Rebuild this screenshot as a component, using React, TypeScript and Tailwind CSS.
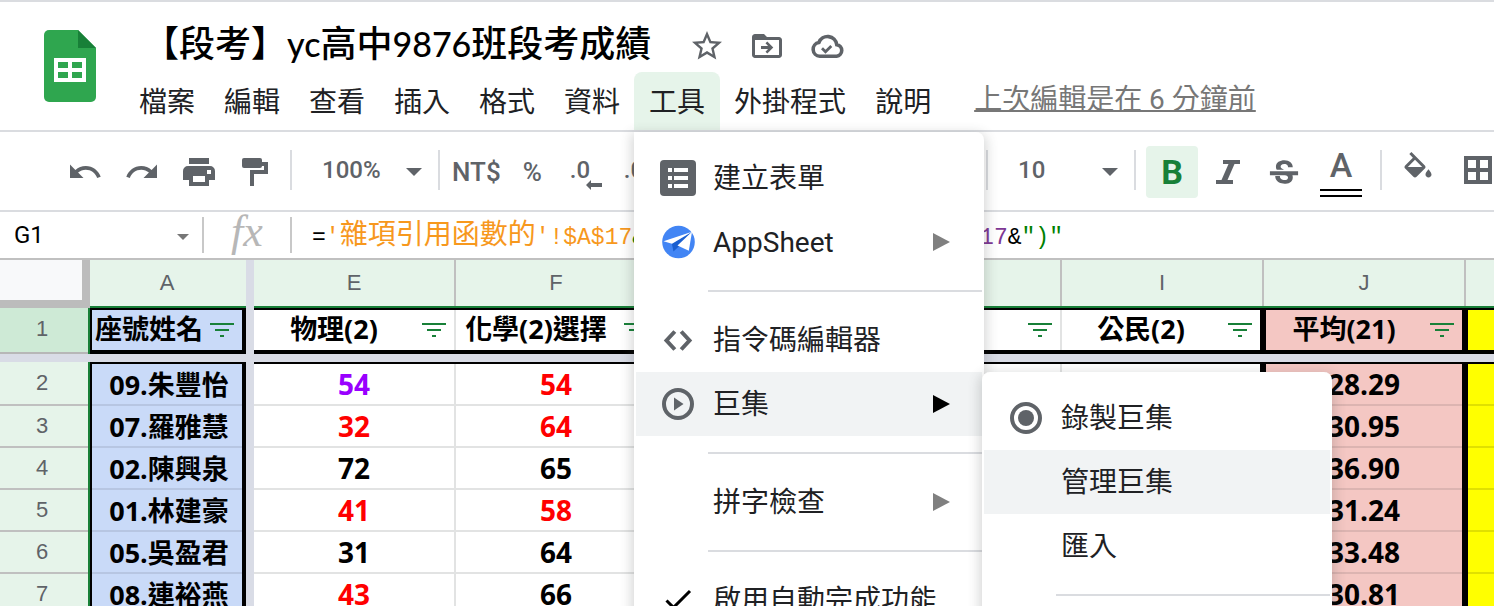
import type { ReactNode } from "react";

const CJK = "font-['Roboto','Noto_Sans_CJK_TC',sans-serif]";

/* ---------- icons ---------- */

function Icon({ children, box = 36, className = "size-9" }: { children: ReactNode; box?: number; className?: string }) {
  return (
    <svg viewBox={`0 0 ${box} ${box}`} className={`${className} shrink-0`} fill="currentColor" aria-hidden="true">
      {children}
    </svg>
  );
}

function Caret({ className }: { className: string }) {
  return (
    <svg viewBox="0 0 16 8" className={className} fill="currentColor" aria-hidden="true">
      <path d="M0 0h16L8 8z" />
    </svg>
  );
}

function SheetsLogo() {
  return (
    <svg viewBox="0 0 52 72" className="h-[72px] w-[52px]" aria-hidden="true">
      <path fill="#2fa64f" d="M5 0h29l18 18v49a5 5 0 0 1-5 5H5a5 5 0 0 1-5-5V5a5 5 0 0 1 5-5z" />
      <path fill="#188038" d="M34 0l18 18H34z" />
      <path fill="#fff" fillRule="evenodd" d="M10 28h32v24H10zM14 32v6h10v-6zM28 32v6h10v-6zM14 42v6h10v-6zM28 42v6h10v-6z" />
    </svg>
  );
}

function FilterIcon() {
  return (
    <svg viewBox="0 0 24 14" className="h-[14px] w-6 shrink-0" fill="#188038" aria-hidden="true">
      <path d="M0 0h24v2H0zM5 6h14v2H5zM10 12h4v2h-4z" />
    </svg>
  );
}

/* ---------- menus ---------- */

const itemClass = "flex h-16 w-full items-center whitespace-nowrap pl-6 text-left text-[28px] leading-none text-[#202124]";

function MenuItem({ icon, label, arrow, active }: { icon?: ReactNode; label: string; arrow?: boolean; active?: boolean }) {
  return (
    <button type="button" role="menuitem" className={`${itemClass} ${active ? "bg-[#f1f3f4]" : "bg-white"}`}>
      <span className="flex w-[53px] shrink-0 text-[#5f6368]">{icon}</span>
      <span className="flex-1 pt-0.5">{label}</span>
      {arrow && (
        <svg viewBox="0 0 18 18" className={`mr-8 size-[18px] ${active ? "text-black" : "text-[#808080]"}`} fill="currentColor" aria-hidden="true">
          <path d="M1 0l17 9-17 9z" />
        </svg>
      )}
    </button>
  );
}

function MenuRule() {
  return <div role="separator" className="my-4 ml-[72px] h-0.5 bg-[#dadce0]" />;
}

const menuClass =
  "absolute z-20 w-[350px] border-x-2 border-white bg-white py-[14px] shadow-[0_4px_12px_3px_rgba(60,64,67,0.2)]";

function MacroMenu() {
  return (
    <div role="menu" aria-label="巨集" className={`${menuClass} left-full top-0 rounded-lg`}>
      <MenuItem
        label="錄製巨集"
        icon={
          <Icon>
            <circle cx="18" cy="18" r="14" fill="none" stroke="currentColor" strokeWidth="4" />
            <circle cx="18" cy="18" r="8" />
          </Icon>
        }
      />
      <MenuItem label="管理巨集" active />
      <MenuItem label="匯入" />
      <MenuRule />
    </div>
  );
}

function ToolsMenu() {
  return (
    <div role="menu" aria-label="工具" className={`${menuClass} left-0 top-full mt-0.5 rounded-b-lg rounded-tr-lg`}>
      <MenuItem
        label="建立表單"
        icon={
          <Icon>
            <rect width="36" height="36" rx="4" />
            <path fill="#fff" d="M8 8h4v4H8zM14 8h14v4H14zM8 16h4v4H8zM14 16h14v4H14zM8 24h4v4H8zM14 24h14v4H14z" />
          </Icon>
        }
      />
      <MenuItem
        label="AppSheet"
        arrow
        icon={
          <Icon>
            <circle cx="18.5" cy="18" r="16.3" fill="#4285f4" />
            <path fill="#1a5fd0" d="M11.8 19.4L31 8.5 18.8 22.6l-5.3 5z" />
            <path fill="#fff" d="M3.5 17.3L32 7.7 12 19.8z" />
            <path fill="#fff" d="M32 7.7l-3.2 19-11.3-5.2z" />
          </Icon>
        }
      />
      <MenuRule />
      <MenuItem
        label="指令碼編輯器"
        icon={
          <Icon>
            <path fill="none" stroke="currentColor" strokeWidth="4" d="M14.800 9.500L6.500 18.500l8.300 9M21.200 9.500l8.300 9-8.300 9" />
          </Icon>
        }
      />
      <div className="relative">
        <MenuItem
          label="巨集"
          arrow
          active
          icon={
            <Icon>
              <circle cx="18" cy="18" r="14" fill="none" stroke="currentColor" strokeWidth="4" />
              <path d="M14 11.5v13l9.5-6.5z" />
            </Icon>
          }
        />
        <MacroMenu />
      </div>
      <MenuRule />
      <MenuItem label="拼字檢查" arrow />
      <MenuRule />
      <MenuItem
        label="啟用自動完成功能"
        icon={
          <Icon>
            <path fill="none" stroke="#000" strokeWidth="3" d="M6.500 18.500l7 7L30 9" />
          </Icon>
        }
      />
    </div>
  );
}

/* ---------- header ---------- */

const MENUS = ["檔案", "編輯", "查看", "插入", "格式", "資料", "工具", "外掛程式", "說明"];

function Header() {
  return (
    <header className="relative z-10 flex border-y-2 border-[#dadce0] bg-white">
      <div className="w-[124px] shrink-0 pl-11 pt-7">
        <SheetsLogo />
      </div>
      <div className="min-w-0 flex-1">
        <div className="flex h-[70px] items-center gap-6 pl-[19px] pt-[18px] text-[#5f6368]">
          <h1 className="mr-[14px] whitespace-nowrap pb-1.5 font-['Lato','Noto_Sans_CJK_TC',sans-serif] text-4xl font-medium leading-none text-black">
            【段考】<span className="text-[34px]">yc</span>高中<span className="text-[34px]">9876</span>班段考成績
          </h1>
          <button type="button" aria-label="加上星號">
            <Icon box={24}>
              <path d="M22 9.24l-7.19-.62L12 2 9.19 8.63 2 9.24l5.46 4.73L5.82 21 12 17.27 18.18 21l-1.63-7.03L22 9.24zM12 15.4l-3.76 2.27 1-4.28-3.32-2.88 4.38-.38L12 6.1l1.71 4.04 4.38.38-3.32 2.88 1 4.28L12 15.4z" />
            </Icon>
          </button>
          <button type="button" aria-label="移動">
            <Icon box={24}>
              <path d="M20 6h-8l-2-2H4c-1.1 0-2 .9-2 2v12c0 1.1.9 2 2 2h16c1.1 0 2-.9 2-2V8c0-1.1-.9-2-2-2zm0 12H4V8h16z" />
              <path d="M12.2 9l4 4-4 4-1.2-1.2 1.7-1.8H8v-2h4.700L11 10.200z" />
            </Icon>
          </button>
          <button type="button" aria-label="查看文件狀態">
            <Icon>
              <path
                fill="none"
                stroke="currentColor"
                strokeWidth="3.6"
                d="M27.600 28.200H10.800a6.900 6.900 0 0 1-.9-13.700A9.300 9.300 0 0 1 27.800 16.700 5.800 5.800 0 0 1 27.600 28.200z"
              />
              <path fill="none" stroke="currentColor" strokeWidth="2.800" d="M13 20.200l3.500 3.500 5.800-5.800" />
            </Icon>
          </button>
        </div>
        <div className="flex items-center">
          <nav className="flex -space-x-px" aria-label="選單">
            {MENUS.map((m) => (
              <div key={m} className="relative">
                <button
                  type="button"
                  className={`h-[58px] whitespace-nowrap rounded-t-lg px-[15px] pt-1 text-[28px] leading-none text-[#202124] ${m === "工具" ? "bg-[#e6f4ea]" : ""}`}
                >
                  {m}
                </button>
                {m === "工具" && <ToolsMenu />}
              </div>
            ))}
          </nav>
          <a
            href="#history"
            className="mb-0.5 ml-7 whitespace-nowrap text-[28px] leading-none text-[#777] underline decoration-2 underline-offset-1"
          >
            上次編輯是在 6 分鐘前
          </a>
        </div>
      </div>
    </header>
  );
}

/* ---------- toolbar ---------- */

function Rule({ className = "" }: { className?: string }) {
  return <div className={`mb-1 h-10 w-0.5 shrink-0 bg-[#dadce0] ${className}`} />;
}

function Toolbar() {
  return (
    <div className="flex h-20 items-center overflow-hidden border-b-2 border-[#dadce0] bg-white pt-0.5 font-medium text-[#5f6368]" role="toolbar">
      <div className="flex w-[986px] shrink-0 items-center overflow-hidden pl-[67px]">
        <div className="flex gap-[21px]">
          <button type="button" aria-label="復原">
            <Icon box={24}>
              <path d="M12.500 8c-2.650 0-5.050.990-6.900 2.600L2 7v9h9l-3.620-3.620c1.390-1.160 3.160-1.880 5.120-1.880 3.540 0 6.550 2.310 7.600 5.500l2.370-.780C21.080 11.030 17.150 8 12.500 8z" />
            </Icon>
          </button>
          <button type="button" aria-label="取消復原">
            <Icon box={24}>
              <path d="M18.400 10.600C16.550 8.990 14.150 8 11.500 8c-4.650 0-8.580 3.030-9.960 7.220L3.900 16c1.050-3.190 4.050-5.500 7.600-5.500 1.950 0 3.730.720 5.120 1.880L13 16h9V7l-3.600 3.600z" />
            </Icon>
          </button>
          <button type="button" aria-label="列印">
            <Icon>
              <path
                fillRule="evenodd"
                d="M8 4h20v6H8zM7 12h22a5 5 0 0 1 5 5v9h-6v6H8v-6H2v-9a5 5 0 0 1 5-5zM12 22v6h12v-6zM26 16v4h4v-4z"
              />
            </Icon>
          </button>
          <button type="button" aria-label="套用格式">
            <Icon>
              <rect x="4" y="4" width="20" height="10" rx="2" />
              <path d="M24 8h6v12H16v12h-4V16h14v-4h-2z" />
            </Icon>
          </button>
        </div>
        <Rule className="ml-4" />
        <div className="relative mb-1 ml-[18px] w-[112px]">
          <select aria-label="縮放" className="w-full appearance-none bg-transparent pl-3 text-2xl leading-8 outline-none">
            <option>100%</option>
          </select>
          <Caret className="pointer-events-none absolute right-0 top-[14px] h-2 w-4" />
        </div>
        <Rule className="ml-4" />
        <button type="button" aria-label="貨幣格式" className="ml-3 text-[26px] leading-8">NT$</button>
        <button type="button" aria-label="百分比格式" className="ml-[22px] text-[26px] leading-8">%</button>
        <button type="button" aria-label="減少小數位數" className="relative mb-1 ml-7 w-8 text-left text-2xl leading-8">
          .0
          <svg viewBox="0 0 16 10" className="absolute -bottom-1 right-0 h-2.5 w-4" fill="currentColor" aria-hidden="true">
            <path d="M0 5l5-5v3h11v4H5v3z" />
          </svg>
        </button>
        <button type="button" aria-label="增加小數位數" className="mb-1 ml-[22px] text-2xl leading-8">.00</button>
        <button type="button" aria-label="更多格式" className="mb-1 ml-7 text-2xl leading-8">123</button>
      </div>
      <Rule />
      <div className="relative mb-1 ml-[18px] w-[112px] shrink-0">
        <select aria-label="字型大小" className="w-full appearance-none bg-transparent pl-3 text-2xl leading-8 outline-none">
          <option>10</option>
        </select>
        <Caret className="pointer-events-none absolute right-0 top-[14px] h-2 w-4" />
      </div>
      <Rule className="ml-4" />
      <button
        type="button"
        aria-label="粗體"
        className="ml-2.5 size-[52px] shrink-0 rounded bg-[#e6f4ea] text-[34px] font-bold leading-none text-[#188038]"
      >
        B
      </button>
      <button type="button" aria-label="斜體" className="ml-3">
        <Icon>
          <path d="M13 6h17v4h-5.500l-7 16H23v4H6v-4h5.500l7-16H13z" />
        </Icon>
      </button>
      <button type="button" aria-label="刪除線" className="ml-5">
        <svg viewBox="0.500 -1 23 23" className="size-9" fill="currentColor" aria-hidden="true">
          <path d="M6.850 7.080C6.850 4.370 9.450 3 12.240 3c1.640 0 3 .490 3.900 1.280.770.650 1.460 1.730 1.460 3.240h-3.010c0-.310-.050-.590-.150-.850-.290-.860-1.200-1.280-2.250-1.280-1.860 0-2.340 1.020-2.340 1.700 0 .480.250.880.740 1.210.380.250.770.480 1.410.700H7.390c-.210-.340-.540-.890-.540-1.920zM21 12.500v-2.500H3v2.500h9.620c1.150.300 1.960.600 1.960 1.470 0 1-.810 1.670-2.280 1.670-1.540 0-2.930-.540-2.930-2.510H6.400c0 .550.080 1.130.240 1.580.810 2.290 3.290 3.300 5.670 3.300 2.270 0 5.300-.890 5.300-4.050 0-.300-.010-.960-.280-1.460H21z" />
        </svg>
      </button>
      <button type="button" aria-label="文字顏色" className="ml-[18px] flex w-[42px] shrink-0 flex-col items-center">
        <span className="text-[34px] leading-9">A</span>
        <span className="mt-1.5 h-2 w-full border-y-2 border-black" />
      </button>
      <Rule className="ml-[18px]" />
      <button type="button" aria-label="填滿顏色" className="ml-[18px] pb-1">
        <Icon box={24}>
          <path d="M16.560 8.940L7.620 0 6.210 1.410l2.380 2.380-5.150 5.150c-.590.590-.590 1.540 0 2.120l5.500 5.500c.290.290.680.440 1.060.440s.770-.150 1.060-.440l5.500-5.500c.590-.580.590-1.530 0-2.120zM5.210 10L10 5.210 14.790 10H5.210zM19 11.500s-2 2.170-2 3.500c0 1.100.900 2 2 2s2-.900 2-2c0-1.330-2-3.500-2-3.500z" />
        </Icon>
      </button>
      <button type="button" aria-label="框線" className="ml-6 pb-1">
        <Icon>
          <path fillRule="evenodd" d="M4 4h28v28H4zM8 8v8h8V8zM20 8v8h8V8zM8 20v8h8v-8zM20 20v8h8v-8z" />
        </Icon>
      </button>
    </div>
  );
}

/* ---------- formula bar ---------- */

function Mono({ children, className = "" }: { children: ReactNode; className?: string }) {
  return <span className={`font-['Liberation_Mono',monospace] text-[23px] ${className}`}>{children}</span>;
}

function FormulaBar() {
  return (
    <div className="flex h-12 items-center overflow-hidden border-b-2 border-[#c0c0c0] bg-white">
      <div className="relative w-[202px] shrink-0">
        <input aria-label="名稱方塊" defaultValue="G1" className="w-full bg-transparent pl-[14px] text-2xl leading-8 text-black outline-none" />
        <Caret className="pointer-events-none absolute right-[13px] top-[15px] h-1.5 w-3 text-[#777]" />
      </div>
      <div className="h-9 w-0.5 shrink-0 bg-[#c8c8c8]" />
      <span className="w-[86px] shrink-0 pb-1.5 text-center font-['Liberation_Serif',serif] text-[44px] italic leading-none text-[#b7b7b7]">fx</span>
      <div className="h-9 w-0.5 shrink-0 bg-[#c8c8c8]" />
      <div role="textbox" aria-label="公式" className="ml-5 whitespace-pre pt-0.5 text-[28px] leading-10 text-black">
        <Mono>=</Mono>
        <span className="text-[#f7981d]">
          <Mono>'</Mono>雜項引用函數的<Mono>'!$A$17</Mono>
        </span>
        <Mono className="text-[#008000]">&amp;"("&amp;</Mono>
        <span className="text-[#7e3794]">
          <Mono>'</Mono>雜項引用函數的<Mono>'!$B$17</Mono>
        </span>
        <Mono>&amp;</Mono>
        <Mono className="text-[#008000]">")"</Mono>
      </div>
    </div>
  );
}

/* ---------- grid ---------- */

const SUBJECTS = [
  { col: "E", title: "物理(2)" },
  { col: "F", title: "化學(2)選擇" },
  { col: "G", title: "歷史(2)" },
  { col: "H", title: "地理" },
  { col: "I", title: "公民(2)" },
];

const ROWS = [
  { name: "09.朱豐怡", scores: [54, 54, 61, 48, 57], avg: "28.29" },
  { name: "07.羅雅慧", scores: [32, 64, 55, 60, 62], avg: "30.95" },
  { name: "02.陳興泉", scores: [72, 65, 70, 66, 71], avg: "36.90" },
  { name: "01.林建豪", scores: [41, 58, 63, 52, 60], avg: "31.24" },
  { name: "05.吳盈君", scores: [31, 64, 60, 67, 64], avg: "33.48" },
  { name: "08.連裕燕", scores: [43, 66, 58, 61, 59], avg: "30.81" },
];

/* Highlighted scores, by [row][column]. */
const COLORS = [
  ["text-[#9900ff]", "text-[#ff0000]"],
  ["text-[#ff0000]", "text-[#ff0000]"],
  [],
  ["text-[#ff0000]", "text-[#ff0000]"],
  [],
  ["text-[#ff0000]"],
];

const BOLD = "font-['Open_Sans','Noto_Sans_CJK_TC',sans-serif] font-bold leading-none text-black whitespace-nowrap";
const colHead = "border-b-2 border-[#188038] bg-[#e6f4ea] p-0 pr-0.5 font-normal";
const colHeadLine = "shadow-[inset_-2px_0_0_#c0c0c0]";
const gap = "bg-[#d9dce6] p-0";

function HeadLabel({ text, tight }: { text: string; tight?: boolean }) {
  return (
    <div className={`flex items-center pr-2 ${tight ? "gap-1" : "gap-2"}`}>
      <span className="flex-1 pb-1 text-center">{text}</span>
      <FilterIcon />
    </div>
  );
}

function Grid() {
  return (
    <table className="w-max table-fixed border-separate border-spacing-0 bg-white text-center font-['Liberation_Sans',sans-serif] text-[22px] leading-none text-[#5f6368]">
      <colgroup>
        <col className="w-[90px]" />
        <col className="w-[156px]" />
        <col className="w-2" />
        {SUBJECTS.map((s) => (
          <col key={s.col} className="w-[202px]" />
        ))}
        <col className="w-[202px]" />
        <col className="w-[202px]" />
      </colgroup>
      <thead>
        <tr className="h-12">
          <th scope="col" aria-label="全選" className="border-b-8 border-r-8 border-[#bcbcbc] bg-[#f8f9fa] p-0" />
          <th scope="col" className={colHead}>A</th>
          <td className={gap} />
          {SUBJECTS.map((s) => (
            <th key={s.col} scope="col" className={`${colHead} ${colHeadLine}`}>{s.col}</th>
          ))}
          <th scope="col" className={`${colHead} ${colHeadLine}`}>J</th>
          <th scope="col" className={colHead} />
        </tr>
      </thead>
      <tbody>
        <tr className="h-[46px]">
          <th scope="row" className="border-r-2 border-[#188038] bg-[#ceead6] p-0 pb-1 pr-1 font-normal shadow-[inset_0_-2px_0_#b7b7b7]">1</th>
          <td className={`${BOLD} border-2 border-b-4 border-r-4 border-black bg-[#c9daf8] p-0 text-[27px]`}>
            <HeadLabel text="座號姓名" tight />
          </td>
          <td className={gap} />
          {SUBJECTS.map((s, i) => (
            <td
              key={s.col}
              className={`${BOLD} border-b-4 border-t-2 border-black p-0 text-[27px] ${i === 4 ? "border-r-4" : "pr-0.5 shadow-[inset_-2px_0_0_#e2e3e3]"}`}
            >
              <HeadLabel text={s.title} />
            </td>
          ))}
          <td className={`${BOLD} border-2 border-b-4 border-r-4 border-black bg-[#f4c7c3] p-0 text-[27px]`}>
            <HeadLabel text="平均(21)" />
          </td>
          <td className="border-2 border-b-4 border-black bg-[#ffff00] p-0" />
        </tr>
        <tr className="h-2">
          <td colSpan={10} className={gap} />
        </tr>
        {ROWS.map((r, ri) => {
          const top = ri === 0 ? "border-t-2" : "";
          return (
            <tr key={r.name} className={ri === 0 ? "h-11" : "h-[42px]"}>
              <th scope="row" className="border-r-2 border-[#188038] bg-[#e6f4ea] p-0 pb-0.5 pr-1 font-normal shadow-[inset_0_-2px_0_#c0c0c0]">
                {ri + 2}
              </th>
              <td className={`${BOLD} ${top} border-l-2 border-r-4 border-black bg-[#c9daf8] p-0 pb-0.5 pl-1 text-[27px] shadow-[inset_0_-2px_0_#b7c6e2]`}>
                {r.name}
              </td>
              <td className={gap} />
              {r.scores.map((v, ci) => (
                <td
                  key={ci}
                  className={`${BOLD} ${top} border-black p-0 pb-0.5 text-[28px] ${ci === 4 ? "border-r-4 shadow-[inset_0_-2px_0_#e2e3e3]" : "pr-0.5 shadow-[inset_-2px_-2px_0_#e2e3e3]"}`}
                >
                  <span className={COLORS[ri][ci] ?? "text-black"}>{v}</span>
                </td>
              ))}
              <td className={`${BOLD} ${top} border-l-2 border-r-4 border-black bg-[#f4c7c3] p-0 pb-0.5 text-[28px] shadow-[inset_0_-2px_0_#dcb4b1]`}>
                {r.avg}
              </td>
              <td className={`${top} border-l-2 border-black bg-[#ffff00] p-0 shadow-[inset_0_-2px_0_#e0e000]`} />
            </tr>
          );
        })}
      </tbody>
    </table>
  );
}

export default function App() {
  return (
    <div className={`flex h-screen w-full flex-col overflow-hidden bg-white ${CJK}`}>
      <Header />
      <Toolbar />
      <FormulaBar />
      <main className="min-h-0 flex-1 overflow-hidden">
        <Grid />
      </main>
    </div>
  );
}
